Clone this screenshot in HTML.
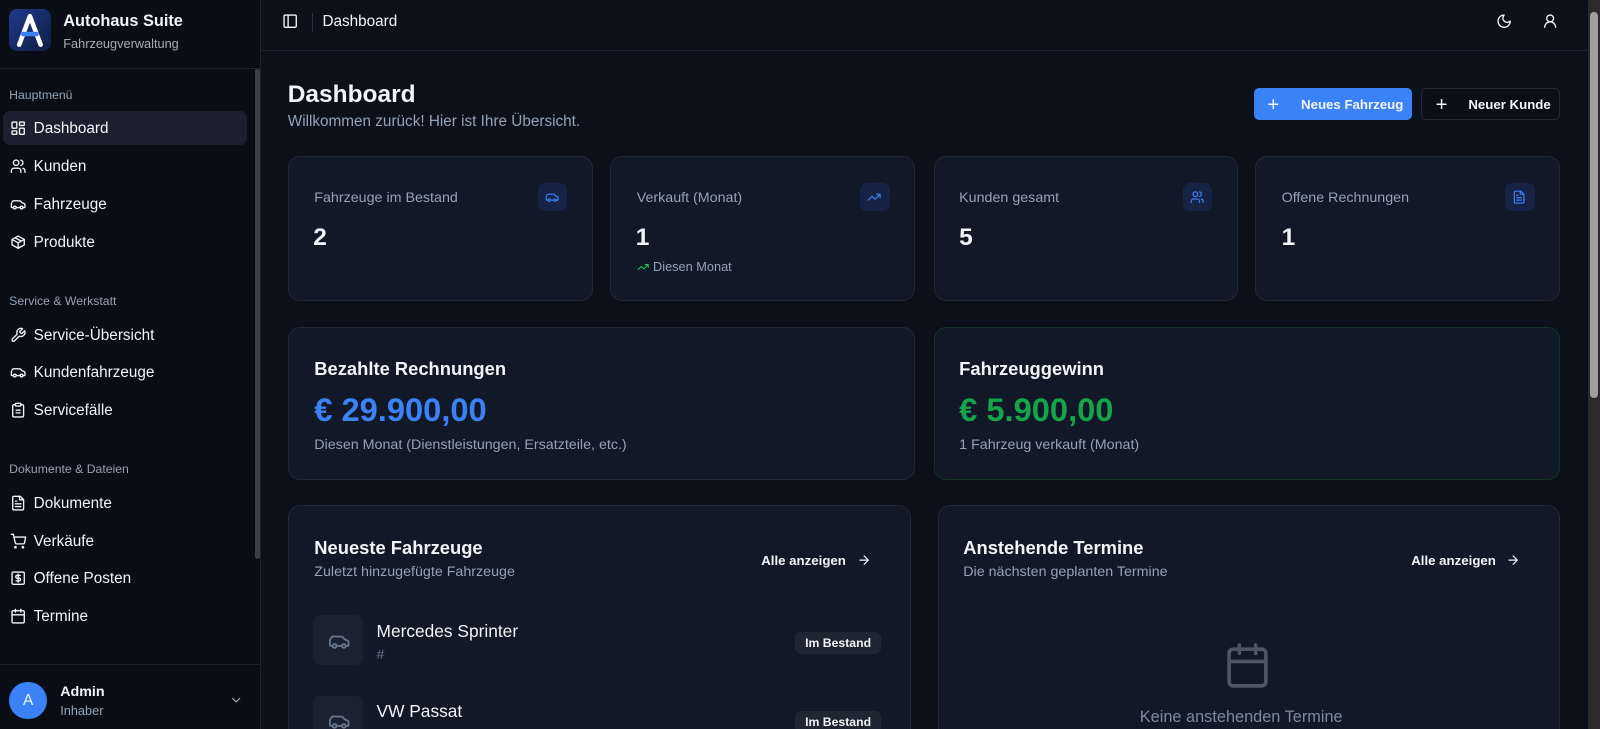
<!DOCTYPE html>
<html><head><meta charset="utf-8"><style>
html,body{margin:0;padding:0;width:1600px;height:729px;overflow:hidden;background:#0b101b}
#w{zoom:1.0204;width:1568px;height:714px;position:relative;font-family:"Liberation Sans",sans-serif;color:#f1f5f9;background:#0b101b}
.a{position:absolute;white-space:nowrap}
svg{fill:none;stroke:currentColor;stroke-width:2;stroke-linecap:round;stroke-linejoin:round}
.sb{left:0;top:0;width:256px;height:714px;background:#0a0d15;border-right:1px solid #1c2230;box-sizing:border-box}
.grp{font-size:12px;color:#94a3b8;left:9px}
.it{left:3px;width:239px;height:33px;border-radius:7px;font-size:15px;color:#f1f5f9}
.it svg{position:absolute;left:7px;top:9px;width:16px;height:16px}
.it span{position:absolute;left:30px;top:9px}
.card{background:#111827;border:1px solid #1f2937;border-radius:12px;box-sizing:border-box}
.lbl{font-size:14px;color:#94a3b8}
.ib{width:29px;height:28px;border-radius:7px;background:#172345;color:#3b82f6}
.ib svg{width:14px;height:14px;margin:7px 7px}
.val{font-size:24px;font-weight:bold}
.badge{background:#1e2533;border-radius:6px;font-size:12px;font-weight:bold;padding:4px 10px}
.vb{width:49px;height:49px;border-radius:7px;background:#1a2130;color:#64748b}
.vb svg{width:22px;height:22px;margin:14px}
</style></head><body><div id="w">
<div class="a sb">
  <div class="a" style="left:9px;top:9px;width:41px;height:41px;border-radius:8px;background:linear-gradient(135deg,#1e3a8a,#0f1e45)">
    <svg viewBox="0 0 41 41" style="width:41px;height:41px;stroke:#fff;stroke-width:4.5"><path d="M10 35 L20.5 7 L31 35"/><path d="M14 24.5 H27" style="stroke:#3b82f6;stroke-width:4.5"/></svg>
  </div>
  <div class="a" style="left:62px;top:12px;font-size:16px;font-weight:bold">Autohaus Suite</div>
  <div class="a" style="left:62px;top:35px;font-size:12.5px;color:#a3acb9">Fahrzeugverwaltung</div>
  <div class="a" style="left:0;top:67px;width:256px;border-top:1px solid #1c2230"></div>
  <div class="a" style="left:250px;top:68px;width:5px;height:480px;background:#3a3f48;border-radius:3px"></div>
  <div class="a grp" style="top:86px">Hauptmenü</div>
  <div class="a it" style="top:109px;background:#1a2030"><svg viewBox="0 0 24 24"><rect x="3" y="3" width="7" height="9" rx="1"/><rect x="14" y="3" width="7" height="5" rx="1"/><rect x="14" y="12" width="7" height="9" rx="1"/><rect x="3" y="16" width="7" height="5" rx="1"/></svg><span>Dashboard</span></div>
  <div class="a it" style="top:146px"><svg viewBox="0 0 24 24"><path d="M16 21v-2a4 4 0 0 0-4-4H6a4 4 0 0 0-4 4v2"/><circle cx="9" cy="7" r="4"/><path d="M22 21v-2a4 4 0 0 0-3-3.87M16 3.13a4 4 0 0 1 0 7.75"/></svg><span>Kunden</span></div>
  <div class="a it" style="top:183px"><svg viewBox="0 0 24 24"><path d="M19 17h2c.6 0 1-.4 1-1v-3c0-.9-.7-1.700-1.500-1.900L18 10s-1.300-1.400-2.200-2.300c-.5-.4-1.100-.7-1.800-.7H5c-.6 0-1.100.4-1.400.9l-1.400 2.900A3.700 3.700 0 0 0 2 12v4c0 .6.4 1 1 1h2"/><circle cx="7" cy="17" r="2"/><path d="M9 17h6"/><circle cx="17" cy="17" r="2"/></svg><span>Fahrzeuge</span></div>
  <div class="a it" style="top:220px"><svg viewBox="0 0 24 24"><path d="M21 8 12 3 3 8v8l9 5 9-5z"/><path d="M3 8l9 5 9-5M12 13v8M7.5 5.5l9 5"/></svg><span>Produkte</span></div>
  <div class="a grp" style="top:288px">Service &amp; Werkstatt</div>
  <div class="a it" style="top:311px"><svg viewBox="0 0 24 24"><path d="M14.7 6.3a1 1 0 0 0 0 1.4l1.6 1.6a1 1 0 0 0 1.4 0l3.77-3.77a6 6 0 0 1-7.94 7.94l-6.91 6.91a2.12 2.12 0 0 1-3-3l6.91-6.91a6 6 0 0 1 7.94-7.94z"/></svg><span>Service-Übersicht</span></div>
  <div class="a it" style="top:348px"><svg viewBox="0 0 24 24"><path d="M19 17h2c.6 0 1-.4 1-1v-3c0-.9-.7-1.7-1.5-1.9L18 10s-1.3-1.4-2.2-2.3c-.5-.4-1.1-.7-1.8-.7H5c-.6 0-1.1.4-1.4.9l-1.4 2.9A3.7 3.7 0 0 0 2 12v4c0 .6.4 1 1 1h2"/><circle cx="7" cy="17" r="2"/><path d="M9 17h6"/><circle cx="17" cy="17" r="2"/></svg><span>Kundenfahrzeuge</span></div>
  <div class="a it" style="top:385px"><svg viewBox="0 0 24 24"><rect x="8" y="2" width="8" height="4" rx="1"/><path d="M16 4h2a2 2 0 0 1 2 2v14a2 2 0 0 1-2 2H6a2 2 0 0 1-2-2V6a2 2 0 0 1 2-2h2M9 12h6M9 16h6"/></svg><span>Servicefälle</span></div>
  <div class="a grp" style="top:453px">Dokumente &amp; Dateien</div>
  <div class="a it" style="top:476px"><svg viewBox="0 0 24 24"><path d="M15 2H6a2 2 0 0 0-2 2v16a2 2 0 0 0 2 2h12a2 2 0 0 0 2-2V7z"/><path d="M14 2v5h5M16 13H8M16 17H8M10 9H8"/></svg><span>Dokumente</span></div>
  <div class="a it" style="top:513px"><svg viewBox="0 0 24 24"><circle cx="8" cy="21" r="1"/><circle cx="19" cy="21" r="1"/><path d="M2 2h3l2.7 12.4a2 2 0 0 0 2 1.6h9.7a2 2 0 0 0 2-1.6L23 6H6"/></svg><span>Verkäufe</span></div>
  <div class="a it" style="top:550px"><svg viewBox="0 0 24 24"><rect x="3" y="3" width="18" height="18" rx="2"/><path d="M15 8h-4.5a2 2 0 0 0 0 4h3a2 2 0 0 1 0 4H9M12 6v12"/></svg><span>Offene Posten</span></div>
  <div class="a it" style="top:587px"><svg viewBox="0 0 24 24"><rect x="3" y="4" width="18" height="18" rx="2"/><path d="M16 2v4M8 2v4M3 10h18"/></svg><span>Termine</span></div>
  <div class="a" style="left:0;top:651px;width:256px;border-top:1px solid #1c2230"></div>
  <div class="a" style="left:9px;top:668px;width:37px;height:37px;border-radius:50%;background:#3b82f6;text-align:center;line-height:37px;font-size:15px">A</div>
  <div class="a" style="left:59px;top:670px;font-size:14px;font-weight:bold">Admin</div>
  <div class="a" style="left:59px;top:689px;font-size:12.5px;color:#94a3b8">Inhaber</div>
  <svg class="a" viewBox="0 0 24 24" style="left:224px;top:679px;width:14px;height:14px;color:#94a3b8"><path d="m6 9 6 6 6-6"/></svg>
</div>
<div class="a" style="left:256px;top:0;width:1300px;height:49px;border-bottom:1px solid #1c2230"></div>
<svg class="a" viewBox="0 0 24 24" style="left:276px;top:13px;width:16px;height:16px"><rect x="3" y="3" width="18" height="18" rx="2"/><path d="M9 3v18"/></svg>
<div class="a" style="left:306px;top:13px;height:18px;border-left:1px solid #2a3140"></div>
<div class="a" style="left:316px;top:13px;font-size:15px">Dashboard</div>
<svg class="a" viewBox="0 0 24 24" style="left:1466px;top:13px;width:16px;height:16px"><path d="M12 3a6 6 0 0 0 9 9 9 9 0 1 1-9-9Z"/></svg>
<svg class="a" viewBox="0 0 24 24" style="left:1511px;top:13px;width:16px;height:16px"><circle cx="12" cy="8" r="5"/><path d="M20 21a8 8 0 0 0-16 0"/></svg>
<div class="a" style="left:1556px;top:0;width:12px;height:714px;background:#2b2b2b"></div>
<div class="a" style="left:1558px;top:12px;width:8px;height:378px;background:#9f9f9f;border-radius:4px"></div>
<div class="a" style="left:282px;top:79px;font-size:24px;font-weight:bold">Dashboard</div>
<div class="a" style="left:282px;top:111px;font-size:15px;color:#94a3b8">Willkommen zurück! Hier ist Ihre Übersicht.</div>
<div class="a" style="left:1229px;top:86px;width:155px;height:32px;border-radius:5px;background:#3b82f6;font-size:13px;font-weight:bold"><span class="a" style="left:13px;top:6px;font-size:20px;font-weight:normal">+</span><span class="a" style="left:46px;top:9px">Neues Fahrzeug</span></div>
<div class="a" style="left:1393px;top:86px;width:136px;height:32px;border-radius:5px;border:1px solid #1f2937;box-sizing:border-box;background:#0a0e17;font-size:13px;font-weight:bold"><span class="a" style="left:13px;top:5px;font-size:20px;font-weight:normal">+</span><span class="a" style="left:45px;top:8px">Neuer Kunde</span></div>
<div class="a card" style="left:282px;top:153px;width:299px;height:142px"></div>
<div class="a card" style="left:598px;top:153px;width:299px;height:142px"></div>
<div class="a card" style="left:915px;top:153px;width:298px;height:142px"></div>
<div class="a card" style="left:1230px;top:153px;width:299px;height:142px"></div>
<div class="a lbl" style="left:308px;top:186px">Fahrzeuge im Bestand</div>
<div class="a lbl" style="left:624px;top:186px">Verkauft (Monat)</div>
<div class="a lbl" style="left:940px;top:186px">Kunden gesamt</div>
<div class="a lbl" style="left:1256px;top:186px">Offene Rechnungen</div>
<div class="a ib" style="left:527px;top:179px"><svg viewBox="0 0 24 24"><path d="M19 17h2c.6 0 1-.4 1-1v-3c0-.9-.7-1.7-1.5-1.9L18 10s-1.3-1.4-2.2-2.3c-.5-.4-1.1-.7-1.8-.7H5c-.6 0-1.1.4-1.4.9l-1.4 2.9A3.7 3.7 0 0 0 2 12v4c0 .6.4 1 1 1h2"/><circle cx="7" cy="17" r="2"/><path d="M9 17h6"/><circle cx="17" cy="17" r="2"/></svg></div>
<div class="a ib" style="left:843px;top:179px"><svg viewBox="0 0 24 24"><path d="m22 7-8.5 8.5-5-5L2 17M16 7h6v6"/></svg></div>
<div class="a ib" style="left:1159px;top:179px"><svg viewBox="0 0 24 24"><path d="M16 21v-2a4 4 0 0 0-4-4H6a4 4 0 0 0-4 4v2"/><circle cx="9" cy="7" r="4"/><path d="M22 21v-2a4 4 0 0 0-3-3.87M16 3.13a4 4 0 0 1 0 7.75"/></svg></div>
<div class="a ib" style="left:1475px;top:179px"><svg viewBox="0 0 24 24"><path d="M15 2H6a2 2 0 0 0-2 2v16a2 2 0 0 0 2 2h12a2 2 0 0 0 2-2V7z"/><path d="M14 2v5h5M16 13H8M16 17H8M10 9H8"/></svg></div>
<div class="a val" style="left:307px;top:220px">2</div>
<div class="a val" style="left:623px;top:220px">1</div>
<div class="a val" style="left:940px;top:220px">5</div>
<div class="a val" style="left:1256px;top:220px">1</div>
<svg class="a" viewBox="0 0 24 24" style="left:624px;top:256px;width:12px;height:12px;color:#22c55e"><path d="m22 7-8.5 8.5-5-5L2 17M16 7h6v6"/></svg>
<div class="a" style="left:640px;top:254px;font-size:12.5px;color:#94a3b8">Diesen Monat</div>
<div class="a card" style="left:282px;top:320px;width:615px;height:150px"></div>
<div class="a card" style="left:915px;top:320px;width:614px;height:150px;border-color:#143326"></div>
<div class="a" style="left:308px;top:351px;font-size:18px;font-weight:bold">Bezahlte Rechnungen</div>
<div class="a" style="left:308px;top:383px;font-size:32px;font-weight:bold;color:#3b82f6">€ 29.900,00</div>
<div class="a" style="left:308px;top:428px;font-size:14px;color:#94a3b8">Diesen Monat (Dienstleistungen, Ersatzteile, etc.)</div>
<div class="a" style="left:940px;top:351px;font-size:18px;font-weight:bold">Fahrzeuggewinn</div>
<div class="a" style="left:940px;top:383px;font-size:32px;font-weight:bold;color:#16a34a">€ 5.900,00</div>
<div class="a" style="left:940px;top:428px;font-size:14px;color:#94a3b8">1 Fahrzeug verkauft (Monat)</div>
<div class="a card" style="left:282px;top:495px;width:611px;height:240px"></div>
<div class="a card" style="left:919px;top:495px;width:610px;height:240px"></div>
<div class="a" style="left:308px;top:526px;font-size:18px;font-weight:bold">Neueste Fahrzeuge</div>
<div class="a" style="left:308px;top:553px;font-size:14px;color:#94a3b8">Zuletzt hinzugefügte Fahrzeuge</div>
<div class="a" style="left:746px;top:542px;font-size:13px;font-weight:bold">Alle anzeigen</div>
<svg class="a" viewBox="0 0 24 24" style="left:840px;top:542px;width:14px;height:14px"><path d="M5 12h14M12 5l7 7-7 7"/></svg>
<div class="a" style="left:944px;top:526px;font-size:18px;font-weight:bold">Anstehende Termine</div>
<div class="a" style="left:944px;top:553px;font-size:14px;color:#94a3b8">Die nächsten geplanten Termine</div>
<div class="a" style="left:1383px;top:542px;font-size:13px;font-weight:bold">Alle anzeigen</div>
<svg class="a" viewBox="0 0 24 24" style="left:1476px;top:542px;width:14px;height:14px"><path d="M5 12h14M12 5l7 7-7 7"/></svg>
<div class="a vb" style="left:307px;top:603px"><svg viewBox="0 0 24 24"><path d="M19 17h2c.6 0 1-.4 1-1v-3c0-.9-.7-1.7-1.5-1.9L18 10s-1.3-1.4-2.2-2.3c-.5-.4-1.1-.7-1.8-.7H5c-.6 0-1.1.4-1.4.9l-1.4 2.9A3.7 3.7 0 0 0 2 12v4c0 .6.4 1 1 1h2"/><circle cx="7" cy="17" r="2"/><path d="M9 17h6"/><circle cx="17" cy="17" r="2"/></svg></div>
<div class="a" style="left:369px;top:609px;font-size:17px">Mercedes Sprinter</div>
<div class="a" style="left:369px;top:634px;font-size:14px;color:#64748b">#</div>
<div class="a badge" style="left:779px;top:619px">Im Bestand</div>
<div class="a vb" style="left:307px;top:682px"><svg viewBox="0 0 24 24"><path d="M19 17h2c.6 0 1-.4 1-1v-3c0-.9-.7-1.7-1.5-1.9L18 10s-1.3-1.4-2.2-2.3c-.5-.4-1.1-.7-1.8-.7H5c-.6 0-1.1.4-1.4.9l-1.4 2.9A3.7 3.7 0 0 0 2 12v4c0 .6.4 1 1 1h2"/><circle cx="7" cy="17" r="2"/><path d="M9 17h6"/><circle cx="17" cy="17" r="2"/></svg></div>
<div class="a" style="left:369px;top:687px;font-size:17px">VW Passat</div>
<div class="a badge" style="left:779px;top:697px">Im Bestand</div>
<svg class="a" viewBox="0 0 24 24" style="left:1199px;top:628px;width:48px;height:48px;color:#4b5565;stroke-width:1.8"><rect x="3" y="4" width="18" height="18" rx="2"/><path d="M16 2v4M8 2v4M3 10h18"/></svg>
<div class="a" style="left:1117px;top:694px;font-size:16px;color:#7b8aa3">Keine anstehenden Termine</div>
</div></body></html>
